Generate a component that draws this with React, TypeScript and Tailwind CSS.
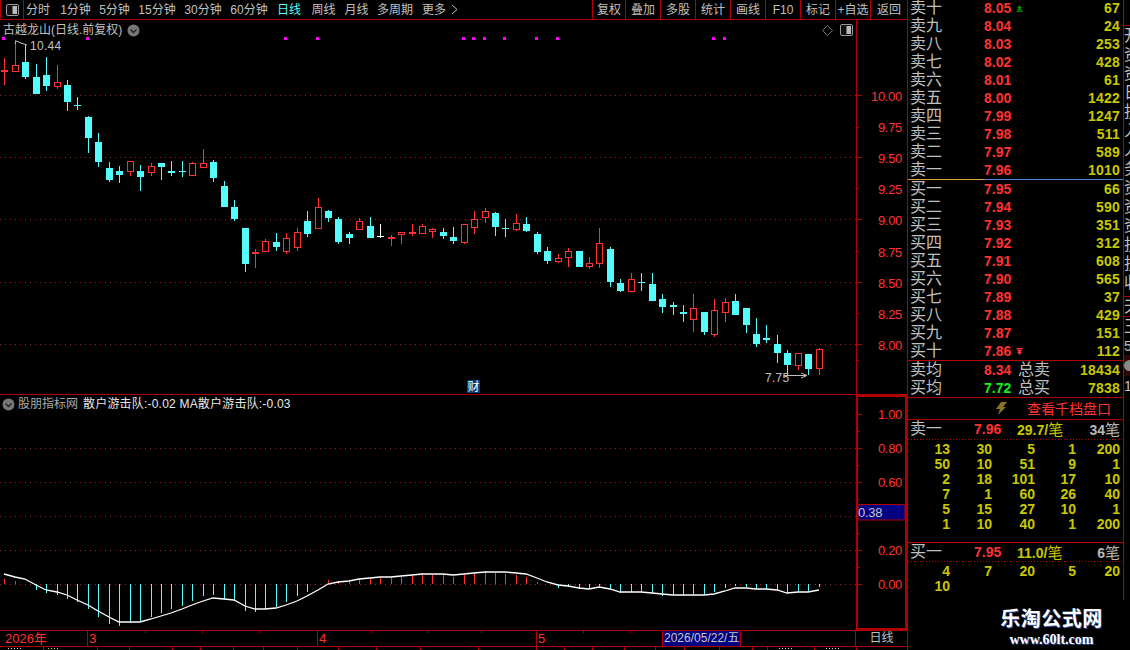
import React from "react";

const LINE = "#b00000";
const RED = "#ff3232";
const CYAN = "#54fcfc";
const CJK = "font-['Liberation_Sans','Noto_Sans_CJK_SC',sans-serif]";

type C = [number, number, number, number, number, "r" | "c" | "w"];
const candles: C[] = [
  [4,58,70,72,85,"r"],[15,40,65,72,72,"r"],[25,44,62,77,79,"c"],[36,64,77,94,94,"c"],[46,57,75,86,91,"c"],[57,65,82,87,89,"r"],[67,80,85,102,111,"c"],[77,97,105,106,110,"c"],[88,116,117,138,153,"c"],[98,133,142,162,167,"c"],
  [109,162,168,180,182,"c"],[119,166,171,175,183,"c"],[130,161,161,172,176,"r"],[140,165,171,177,191,"c"],[151,163,166,173,176,"r"],[161,163,163,167,180,"c"],[171,161,171,173,176,"c"],[182,161,171,172,177,"c"],[192,162,163,176,176,"r"],[203,149,163,168,168,"r"],
  [213,160,162,178,182,"c"],[224,181,186,207,207,"c"],[234,200,207,219,221,"c"],[245,228,228,264,272,"c"],[255,249,252,254,268,"r"],[265,239,241,252,252,"r"],[276,233,242,247,251,"c"],[286,233,238,252,254,"r"],[297,228,232,248,251,"r"],[307,211,221,234,237,"c"],
  [318,198,207,229,229,"r"],[328,210,211,218,222,"c"],[338,217,219,242,244,"c"],[349,232,234,238,244,"c"],[359,218,221,230,230,"r"],[370,217,226,238,238,"c"],[380,224,236,237,238,"w"],[391,235,237,239,246,"r"],[401,232,232,235,244,"r"],[412,224,232,234,236,"r"],
  [422,224,226,234,234,"r"],[432,228,229,232,238,"r"],[443,228,232,236,239,"c"],[453,227,237,241,244,"c"],[464,224,224,243,244,"r"],[474,211,219,228,234,"r"],[485,208,211,218,223,"r"],[495,212,213,227,236,"c"],[505,219,228,229,237,"c"],[516,214,223,230,231,"r"],
  [526,217,224,231,232,"c"],[537,232,234,252,254,"c"],[547,247,251,261,264,"c"],[558,254,258,262,263,"r"],[568,248,251,258,267,"r"],[579,251,251,267,267,"c"],[589,257,263,267,269,"r"],[599,228,243,264,268,"r"],[610,247,249,282,287,"c"],[620,279,283,291,292,"c"],
  [631,273,279,292,292,"r"],[641,273,282,283,291,"c"],[652,273,284,301,301,"c"],[662,294,299,307,313,"c"],[673,302,305,307,315,"c"],[683,305,312,314,322,"c"],[693,294,308,320,332,"r"],[704,312,312,332,335,"c"],[714,299,310,335,337,"r"],[725,298,302,313,322,"r"],
  [735,294,301,315,315,"c"],[746,308,308,325,333,"c"],[756,318,334,344,347,"c"],[766,325,338,340,343,"c"],[777,335,344,353,363,"c"],[787,350,353,365,375,"c"],[798,353,353,366,370,"r"],[808,354,354,369,375,"c"],[819,348,349,369,375,"r"],
];

const bars: [number, number][] = [
  [4,579],[15,581],[36,590],[46,593],[57,595],[67,599],[77,602],[88,609],[98,617],[109,624],[119,626],[130,623],[140,621],[151,617],[161,613],[171,609],[182,606],[192,601],[203,596],[213,595],[224,599],[234,601],[245,611],[255,612],[265,609],[276,607],[286,602],[297,596],[307,592],[328,580],[338,581],[349,582],[359,579],[370,579],[380,578],[391,578],[401,577],[412,576],[422,575],[432,575],[443,575],[453,577],[464,575],[474,574],[485,571],[495,573],[505,574],[516,575],[526,577],[537,582],[558,588],[568,586],[579,589],[589,589],[599,586],[610,589],[620,593],[631,592],[641,592],[652,593],[662,596],[673,595],[683,595],[693,594],[704,595],[714,592],[725,588],[735,586],[746,587],[756,589],[766,589],[777,590],[787,593],[798,592],[808,592],[819,587],
];

const curve = "4,574 15,577 25,579 36,585 46,590 57,592 67,595 77,600 88,605 98,611 109,617 119,622 130,622 140,622 151,619 161,616 171,613 182,609 192,605 203,601 213,598 224,599 234,600 245,606 255,609 265,609 276,608 286,605 297,601 307,596 318,590 328,584 338,582 349,581 359,579 370,578 380,577 391,577 401,576 412,575 422,574 432,574 443,574 453,575 464,574 474,573 485,572 495,572 505,572 516,573 526,574 537,578 547,582 558,585 568,586 579,588 589,589 599,587 610,589 620,592 631,592 641,592 652,593 662,594 673,595 683,595 693,595 704,595 714,594 725,591 735,588 746,588 756,589 766,589 777,590 787,593 798,592 808,592 819,590";

function Candle({ d }: { d: C }) {
  const [x, hi, top, bot, lo, c] = d;
  const col = c === "r" ? RED : c === "w" ? "#ffffff" : CYAN;
  const h = bot - top;
  return (
    <g>
      <rect x={x} y={hi} width={1} height={lo - hi} fill={col} />
      {c === "r" && h > 2 ? (
        <rect x={x - 2.5} y={top + 0.5} width={6} height={h - 1} fill="#000" stroke={col} strokeWidth={1} />
      ) : (
        <rect x={x - 3} y={top} width={7} height={h} fill={col} />
      )}
    </g>
  );
}

function Chevron() {
  return (
    <svg width="13" height="13" viewBox="0 0 13 13" className="shrink-0">
      <circle cx="6.5" cy="6.5" r="6" fill="#777" />
      <path d="M3.5 5.5 L6.5 8.5 L9.5 5.5" fill="none" stroke="#222" strokeWidth="1.4" />
    </svg>
  );
}

function WinIcon() {
  return (
    <svg width="13" height="12" viewBox="0 0 13 12" className="shrink-0">
      <rect x="0.5" y="0.5" width="12" height="11" rx="1.5" fill="#111" stroke="#999" />
      <rect x="6.5" y="2" width="4.5" height="8" fill="#bbb" />
    </svg>
  );
}

const mainLabels: [string, number][] = [["10.00",96],["9.75",127],["9.50",158],["9.25",189],["9.00",220],["8.75",252],["8.50",283],["8.25",314],["8.00",345]];
const mainTicks: [number, number][] = [[95,5],[127,2],[157,5],[188,2],[219,5],[251,2],[282,5],[313,2],[344,5],[360,2]];
const subLabels: [string, number][] = [["1.00",414],["0.80",448],["0.60",482],["0.20",550],["0.00",584]];
const subTicks: [number, number][] = [[414,4],[431,2],[448,4],[465,2],[482,4],[499,2],[533,2],[550,4],[567,2],[584,4]];

const leftTabs = [
  { t: "分时", w: "w-[26px] ml-[25px]" }, { t: "1分钟", w: "w-[39px] ml-[5px]" }, { t: "5分钟", w: "w-[39px]" }, { t: "15分钟", w: "w-[46px]" }, { t: "30分钟", w: "w-[46px]" }, { t: "60分钟", w: "w-[46px]" },
];
const afterTabs = [{ t: "周线", w: "w-[33px]" }, { t: "月线", w: "w-[33px]" }, { t: "多周期", w: "w-[44px]" }];
const rightBtns = [
  { t: "复权", w: "w-[33px]" }, { t: "叠加", w: "w-[35px]" }, { t: "多股", w: "w-[35px]" }, { t: "统计", w: "w-[35px]" }, { t: "画线", w: "w-[35px]" }, { t: "F10", w: "w-[35px]" }, { t: "标记", w: "w-[35px]" }, { t: "+自选", w: "w-[35px]" }, { t: "返回", w: "w-[37px]" },
];

function TopBar() {
  return (
    <div className={`flex h-[20px] shrink-0 items-center border-b border-[#b00000] text-[12px] leading-none text-[#c0c0c0] ${CJK}`}>
      <div className="absolute left-0 top-0 flex h-[19px] w-[24px] items-center justify-center border-x border-[#b00000]">
        <WinIcon />
      </div>
      {leftTabs.map((a) => (
        <span key={a.t} className={`${a.w} text-center whitespace-nowrap`}>{a.t}</span>
      ))}
      <span className="ml-[-1px] w-[36px] text-center text-[#54fcfc]">日线</span>
      {afterTabs.map((a) => (
        <span key={a.t} className={`${a.w} text-center whitespace-nowrap`}>{a.t}</span>
      ))}
      <span className="whitespace-nowrap pl-[5px]">更多</span>
      <svg width="7" height="11" viewBox="0 0 7 11" className="ml-[5px]"><path d="M1 1 L6 5.5 L1 10" fill="none" stroke="#c0c0c0" /></svg>
      <div className="ml-auto flex h-full">
        {rightBtns.map((b) => (
          <span key={b.t} className={`${b.w} flex items-center justify-center whitespace-nowrap border-l border-[#b00000]`}>{b.t}</span>
        ))}
      </div>
    </div>
  );
}

function MainChart() {
  return (
    <div className="flex h-[375px] shrink-0 border-b border-[#b00000]">
      <div className="relative h-full w-[856px] shrink-0 border-r-0">
        <div className={`absolute left-[3px] top-[3px] flex items-center gap-[5px] text-[12px] leading-[14px] text-[#c0c0c0] ${CJK}`}>
          <span>古越龙山(日线.前复权)</span>
          <Chevron />
        </div>
        <div className="absolute right-[3px] top-[4px] flex items-center gap-[7px]">
          <svg width="11" height="11" viewBox="0 0 11 11"><path d="M5.5 0.5 L10.5 5.5 L5.5 10.5 L0.5 5.5 Z" fill="none" stroke="#777" /></svg>
          <WinIcon />
        </div>
        <div className={`absolute left-[467px] top-[360px] flex h-[13px] w-[13px] items-center justify-center bg-[#0c3c70] text-[12px] leading-none text-white ${CJK}`}>财</div>
        <svg width="856" height="374" viewBox="0 20 856 374" className="block">
          {[95, 157, 219, 282, 344].map((y) => (
            <line key={y} x1="0" x2="856" y1={y + 0.5} y2={y + 0.5} stroke="#a02020" strokeDasharray="1 4" />
          ))}
          {[3, 87, 285, 317, 463, 473, 484, 504, 536, 557, 713, 724].map((x) => (
            <rect key={x} x={x - 1} y={37} width={3} height={3} fill="#ff00ff" />
          ))}
          <g shapeRendering="crispEdges">
            {candles.map((d) => <Candle key={d[0]} d={d} />)}
          </g>
          <path d="M15 44 L16 41 L21 43 L27 45" fill="none" stroke="#c0c0c0" />
          <text x="30" y="50" fontSize="12" letterSpacing="0.3" fill="#c0c0c0" fontFamily="Liberation Sans">10.44</text>
          <text x="765" y="382" fontSize="12" letterSpacing="0.3" fill="#c0c0c0" fontFamily="Liberation Sans">7.75</text>
          <path d="M784 375.5 H807" stroke="#c0c0c0" />
          <path d="M801 373 L807 375.5 L801 378" fill="none" stroke="#c0c0c0" />
        </svg>
      </div>
      <div className="h-full w-[51px] shrink-0 border-l border-[#b00000]">
        <svg width="50" height="374" viewBox="857 20 50 374" className="block">
          {mainTicks.map(([y, l]) => (
            <line key={y} x1="857" x2={857 + l} y1={y + 0.5} y2={y + 0.5} stroke={LINE} />
          ))}
          {mainLabels.map(([t, y]) => (
            <text key={t} x="902" y={y + 5} textAnchor="end" fontSize="13" letterSpacing="-0.3" fill={RED} fontFamily="Liberation Sans">{t}</text>
          ))}
        </svg>
      </div>
    </div>
  );
}

function SubChart() {
  return (
    <div className="flex h-[236px] shrink-0 border-b border-[#b00000]">
      <div className="relative h-full w-[856px] shrink-0">
        <div className={`absolute left-[2px] top-[2px] flex items-center text-[12px] leading-[14px] text-[#c0c0c0] ${CJK}`}>
          <Chevron />
          <span className="ml-[3px] text-[#aaaaaa]">股朋指标网</span>
          <span className="ml-[5px] whitespace-nowrap tracking-[0.2px] text-[#e8e8e8]">散户游击队:-0.02 MA散户游击队:-0.03</span>
        </div>
        <svg width="856" height="235" viewBox="0 395 856 235" className="block">
          {[448, 482, 516, 550, 584].map((y) => (
            <line key={y} x1="0" x2="856" y1={y + 0.5} y2={y + 0.5} stroke="#a02020" strokeDasharray="1 4" />
          ))}
          <g shapeRendering="crispEdges">
            {bars.map(([x, y]) => (
              <rect key={x} x={x} y={Math.min(y, 584)} width={1} height={Math.abs(y - 584)} fill={y < 584 ? RED : CYAN} />
            ))}
          </g>
          <polyline points={curve} fill="none" stroke="#ffffff" strokeWidth="1.3" />
        </svg>
      </div>
      <div className="h-full w-[51px] shrink-0 border-2 border-[#b40000]">
        <svg width="47" height="231" viewBox="858 397 47 231" className="block">
          {subTicks.map(([y, l]) => (
            <line key={y} x1="858" x2={858 + l} y1={y + 0.5} y2={y + 0.5} stroke={LINE} />
          ))}
          {subLabels.map(([t, y]) => (
            <text key={t} x="902" y={y + 5} textAnchor="end" fontSize="13" letterSpacing="-0.3" fill={RED} fontFamily="Liberation Sans">{t}</text>
          ))}
          <rect x="858" y="504.5" width="47" height="15.5" fill="#000080" stroke={LINE} />
          <text x="858" y="517" fontSize="13" letterSpacing="-0.3" fill="#c8c8c8" fontFamily="Liberation Sans">0.38</text>
        </svg>
      </div>
    </div>
  );
}

function DateBar() {
  return (
    <div className={`relative flex h-[16px] shrink-0 border-b border-[#b00000] text-[13px] leading-[15px] text-[#ff3232] ${CJK}`}>
      <svg width="856" height="2" className="absolute left-0 top-0">
        {[145, 202, 260, 372, 427, 481, 583, 630].map((x) => <rect key={x} x={x} y={0} width={1} height={2} fill={LINE} />)}
      </svg>
      <span className="w-[88px] border-r border-[#b00000] pl-[5px]">2026年</span>
      <span className="w-[230px] border-r border-[#b00000] pl-[1px]">3</span>
      <span className="w-[219px] border-r border-[#b00000] pl-[1px]">4</span>
      <span className="w-[125px] pl-[1px]">5</span>
      <span className="w-[79px] whitespace-nowrap border-x border-[#c00000] bg-[#000080] pl-[1px] text-[12px] text-[#c8c8c8]">2026/05/22/五</span>
      <span className="w-[115px] border-r border-[#b00000]" />
      <span className="flex-1 text-center text-[12px] text-[#c0c0c0]">日线</span>
    </div>
  );
}

const WHITE_DASH = "w-[15px] bg-[repeating-linear-gradient(90deg,#dddddd_0_1px,transparent_1px_3px)]";
const YELLOW_DASH = "w-[11px] bg-[repeating-linear-gradient(90deg,#d8d800_0_1px,transparent_1px_3px)]";
const tabs: { w: string; d?: string; p?: string }[] = [
  { w: "w-[44px]", d: WHITE_DASH, p: "pl-[8px]" }, { w: "w-[54px]", d: YELLOW_DASH, p: "pl-[4px]" }, { w: "w-[32px]" }, { w: "w-[43px]" },
  { w: "w-[28px]" }, { w: "w-[33px]" }, { w: "w-[30px]" }, { w: "w-[34px]" }, { w: "w-[41px]" }, { w: "w-[38px]" }, { w: "w-[44px]" }, { w: "w-[58px]" }, { w: "w-[58px]" }, { w: "w-[28px]" }, { w: "w-[28px]" }, { w: "w-[32px]" }, { w: "w-[31px]" }, { w: "w-[29px]" }, { w: "w-[35px]" }, { w: "w-[33px]" }, { w: "w-[15px]" },
  { w: "w-[47px]", d: WHITE_DASH, p: "pl-[11px]" }, { w: "w-[42px]", d: WHITE_DASH, p: "pl-[11px]" }, { w: "w-[51px]" },
];

function BottomTabs() {
  return (
    <div className="flex h-[3px] shrink-0 overflow-hidden">
      {tabs.map((b, i) => (
        <div key={i} className={`${b.w} ${b.p ?? ""} h-[3px] shrink-0 border-r border-[#b00000] pt-[1px]`}>
          {b.d && <div className={`${b.d} h-px`} />}
        </div>
      ))}
    </div>
  );
}

const sells: [string, string, string][] = [["卖十","8.05","67"],["卖九","8.04","24"],["卖八","8.03","253"],["卖七","8.02","428"],["卖六","8.01","61"],["卖五","8.00","1422"],["卖四","7.99","1247"],["卖三","7.98","511"],["卖二","7.97","589"],["卖一","7.96","1010"]];
const buys: [string, string, string][] = [["买一","7.95","66"],["买二","7.94","590"],["买三","7.93","351"],["买四","7.92","312"],["买五","7.91","608"],["买六","7.90","565"],["买七","7.89","37"],["买八","7.88","429"],["买九","7.87","151"],["买十","7.86","112"]];

function Row({ l, p, v, mark }: { l: string; p: string; v: string; mark?: React.ReactNode }) {
  return (
    <div className="flex h-[18px] shrink-0 items-center">
      <span className="w-[76px] pl-[2px] text-[16px] leading-none text-[#c0c0c0]">{l}</span>
      <span className="w-[30px] text-[14px] font-bold leading-none text-[#ff3232]">{p}</span>
      <span className="flex w-[10px] justify-center">{mark}</span>
      <span className="flex-1 pr-[3px] text-right text-[14px] font-bold leading-none tracking-[0.2px] text-[#c8c800]">{v}</span>
    </div>
  );
}

const sellTable = [["13","30","5","1","200"],["50","10","51","9","1"],["2","18","101","17","10"],["7","1","60","26","40"],["5","15","27","10","1"],["1","10","40","1","200"]];
const buyTable = [["4","7","20","5","20"],["10","","","",""]];
const colW = ["w-[42px]", "w-[42px]", "w-[43px]", "w-[41px]", "w-[44px]"];

function Table({ rows }: { rows: string[][] }) {
  return (
    <div className="flex flex-col">
      {rows.map((r, i) => (
        <div key={i} className="flex h-[15px] items-center text-[14px] font-bold leading-none text-[#c8c800]">
          {r.map((c, j) => <span key={j} className={`${colW[j]} text-right`}>{c}</span>)}
        </div>
      ))}
    </div>
  );
}

function Dotted() {
  return <div className="h-px shrink-0 bg-[repeating-linear-gradient(90deg,#c00000_0_1px,transparent_1px_3px)]" />;
}

function Trade({ l, p, a, n }: { l: string; p: string; a: string; n: string }) {
  return (
    <div className="flex h-[18px] shrink-0 items-center leading-none">
      <span className="w-[66px] pl-[2px] text-[16px] text-[#c0c0c0]">{l}</span>
      <span className="w-[43px] text-[14px] font-bold text-[#ff3232]">{p}</span>
      <span className="w-[47px] whitespace-nowrap text-[14px] font-bold text-[#c8c800]">{a}<span className="text-[15px] font-normal">笔</span></span>
      <span className="flex-1 whitespace-nowrap pr-[3px] text-right text-[14px] font-bold text-[#b8b8b8]">{n}<span className="text-[15px] font-normal">笔</span></span>
    </div>
  );
}

function Quote() {
  return (
    <div className={`w-[217px] shrink-0 border-l border-[#b00000] ${CJK}`}>
      <div className="-mt-px flex h-[601px] flex-col border-r border-[#b00000]">
        {sells.map((s, i) => (
          <Row key={s[0]} l={s[0]} p={s[1]} v={s[2]} mark={i === 0 ? (
            <svg width="7" height="7" viewBox="0 0 7 7"><path d="M3.5 0 L6 3 H4.5 L6.5 5.5 H0.5 L2.5 3 H1 Z M0.5 6 H6.5 V7 H0.5 Z" fill="#0a8a0a" /></svg>
          ) : undefined} />
        ))}
        <div className="flex h-px shrink-0">
          <div className="w-[77px] bg-[#d9a441]" />
          <div className="flex-1 bg-[#4a86c8]" />
        </div>
        {buys.map((s, i) => (
          <Row key={s[0]} l={s[0]} p={s[1]} v={s[2]} mark={i === 9 ? (
            <svg width="7" height="7" viewBox="0 0 7 7"><path d="M0.5 0 H6.5 V1 H0.5 Z M0.5 1.5 H6.5 L4.5 4 H6 L3.5 7 L1 4 H2.5 Z" fill="#ff3232" /></svg>
          ) : undefined} />
        ))}
        <div className="h-px shrink-0 bg-[#b00000]" />
        <div className="flex h-[18px] shrink-0 items-center leading-none">
          <span className="w-[76px] pl-[2px] text-[16px] text-[#c0c0c0]">卖均</span>
          <span className="w-[34px] text-[14px] font-bold text-[#ff3232]">8.34</span>
          <span className="w-[40px] text-[16px] text-[#c0c0c0]">总卖</span>
          <span className="flex-1 pr-[3px] text-right text-[14px] font-bold tracking-[0.2px] text-[#c8c800]">18434</span>
        </div>
        <div className="flex h-[18px] shrink-0 items-center leading-none">
          <span className="w-[76px] pl-[2px] text-[16px] text-[#c0c0c0]">买均</span>
          <span className="w-[34px] text-[14px] font-bold text-[#14f014]">7.72</span>
          <span className="w-[40px] text-[16px] text-[#c0c0c0]">总买</span>
          <span className="flex-1 pr-[3px] text-right text-[14px] font-bold tracking-[0.2px] text-[#c8c800]">7838</span>
        </div>
        <div className="h-px shrink-0 bg-[#b00000]" />
        <div className="flex h-[21px] shrink-0 items-center pl-[88px]">
          <svg width="11" height="13" viewBox="0 0 11 13"><path d="M5 0 H11 L7 5 H10 L2 13 L4 7 H0 Z" fill="#8a7428" /></svg>
          <span className="ml-[20px] text-[14px] leading-none text-[#ff3232]">查看千档盘口</span>
        </div>
        <div className="h-px shrink-0 bg-[#b00000]" />
        <Trade l="卖一" p="7.96" a="29.7/" n="34" />
        <div className="h-px shrink-0" />
        <Dotted />
        <div className="pt-px">
          <Table rows={sellTable} />
        </div>
        <div className="h-[11px] shrink-0" />
        <div className="h-px shrink-0 bg-[#c00000]" />
        <Trade l="买一" p="7.95" a="11.0/" n="6" />
        <Dotted />
        <div className="pt-px">
          <Table rows={buyTable} />
        </div>
      </div>
    </div>
  );
}

const edge1 = ["开","资","资","日","投","入","入","务","资","资","资","投","投","收"];

function Edge() {
  return (
    <div className={`flex w-[6px] shrink-0 flex-col overflow-hidden text-[16px] leading-none text-[#c0c0c0] ${CJK}`}>
      <div className="h-[26px] shrink-0 border-b border-[#b00000]" />
      {edge1.map((c, i) => (
        <div key={i} className="flex h-[19px] shrink-0 items-center whitespace-nowrap">{c}</div>
      ))}
      <div className="h-[5px] shrink-0 border-b border-[#b00000]" />
      <div className="flex h-[20px] shrink-0 items-center border-b border-[#b00000]">天</div>
      <div className="flex h-[19px] shrink-0 items-center">王</div>
      <div className="flex h-[19px] shrink-0 items-center text-[14px]">5</div>
      <div className="flex h-[21px] shrink-0 items-center bg-[#2a0808]"><span className="h-[11px] w-[11px] shrink-0 rounded-full bg-[#888]" /></div>
      <div className="flex h-[19px] shrink-0 items-center text-[14px]">1</div>
    </div>
  );
}

export default function App() {
  return (
    <div className="relative flex h-[650px] w-[1130px] overflow-hidden bg-black">
      <div className="flex w-[907px] shrink-0 flex-col">
        <TopBar />
        <MainChart />
        <SubChart />
        <DateBar />
        <BottomTabs />
      </div>
      <Quote />
      <Edge />
      <div className={`absolute left-[999px] top-[604px] flex w-[105px] flex-col items-center bg-black ${CJK}`}>
        <span className="text-[20px] font-bold leading-[30px] tracking-[0.5px] text-white [text-shadow:1px_1px_0_#2a4aa0]">乐淘公式网</span>
        <span className="mt-[-1px] font-['Liberation_Serif',serif] text-[14px] font-bold leading-[14px] text-white [text-shadow:1px_1px_0_#2a4aa0]">www.60lt.com</span>
      </div>
    </div>
  );
}
